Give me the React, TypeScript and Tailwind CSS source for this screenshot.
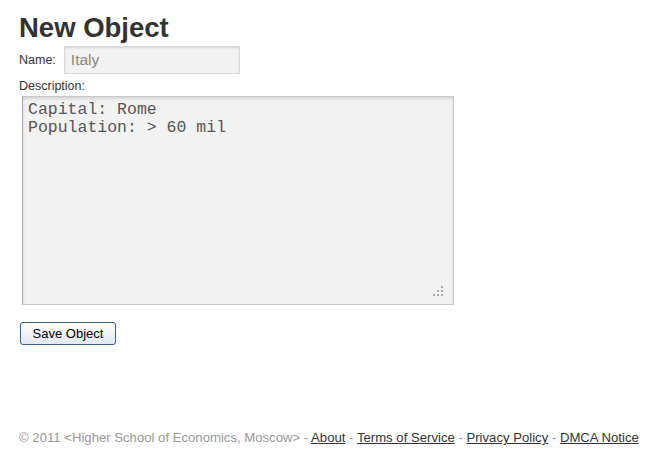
import { useState } from "react";

const links = ["About", "Terms of Service", "Privacy Policy", "DMCA Notice"];

// little dotted grip in the textarea corner
const grip = [
  [8, 0],
  [4, 4],
  [8, 4],
  [0, 8],
  [4, 8],
  [8, 8],
];

export default function App() {
  const [name, setName] = useState("Italy");
  const [desc, setDesc] = useState("Capital: Rome\nPopulation: > 60 mil");

  return (
    <div className="w-[655px] h-[461px] bg-white flex flex-col font-['Liberation_Sans',Arial,sans-serif] text-[#333]">
      <div className="pl-[19px] pt-[11px]">
        <h1 className="text-[27.5px] leading-[33px] font-bold text-[#333]">New Object</h1>
        <div className="flex items-center mt-[2px]">
          <label className="text-[12.5px] leading-[14px] mr-[8px]">Name:</label>
          <input
            value={name}
            onChange={(e) => setName(e.target.value)}
            className="w-[176px] h-[28px] bg-[#f2f2f2] border border-[#d8d8d8] shadow-[inset_0_1px_2px_rgba(0,0,0,0.12)] px-[6px] text-[15.5px] text-[#888] outline-none"
          />
        </div>
        <div className="text-[12.5px] leading-[14px] mt-[5px]">Description:</div>
        <div className="relative ml-[3px] mt-[3px] w-[432px] h-[209px]">
          <textarea
            value={desc}
            onChange={(e) => setDesc(e.target.value)}
            className="block w-full h-full bg-[#f2f2f2] border border-[#c8c8c8] border-l-[#aaa] shadow-[inset_0_2px_3px_rgba(0,0,0,0.12)] px-[5px] pt-[4px] font-['Liberation_Mono','Courier_New',monospace] text-[16.5px] leading-[18px] text-[#555] outline-none resize-none"
          />
          <svg className="absolute right-[11px] bottom-[9px]" width="10" height="10" viewBox="0 0 10 10">
            {grip.map(([x, y]) => (
              <rect key={`${x}-${y}`} x={x} y={y} width="2" height="2" fill="#aaa" />
            ))}
          </svg>
        </div>
        <button className="mt-[17px] ml-[1px] w-[96px] h-[23px] rounded-[3px] border border-[#3d5f8f] bg-[linear-gradient(#ffffff,#e4e6f0)] text-[13px] text-black leading-none">
          Save Object
        </button>
      </div>
      <div className="mt-auto mb-[16px] pl-[19px] text-[13.15px] leading-[15px] text-[#999]">
        © 2011 &lt;Higher School of Economics, Moscow&gt;
        {links.map((l) => (
          <span key={l}>
            {" - "}
            <a href="#" className="underline text-[#333]">
              {l}
            </a>
          </span>
        ))}
      </div>
    </div>
  );
}
